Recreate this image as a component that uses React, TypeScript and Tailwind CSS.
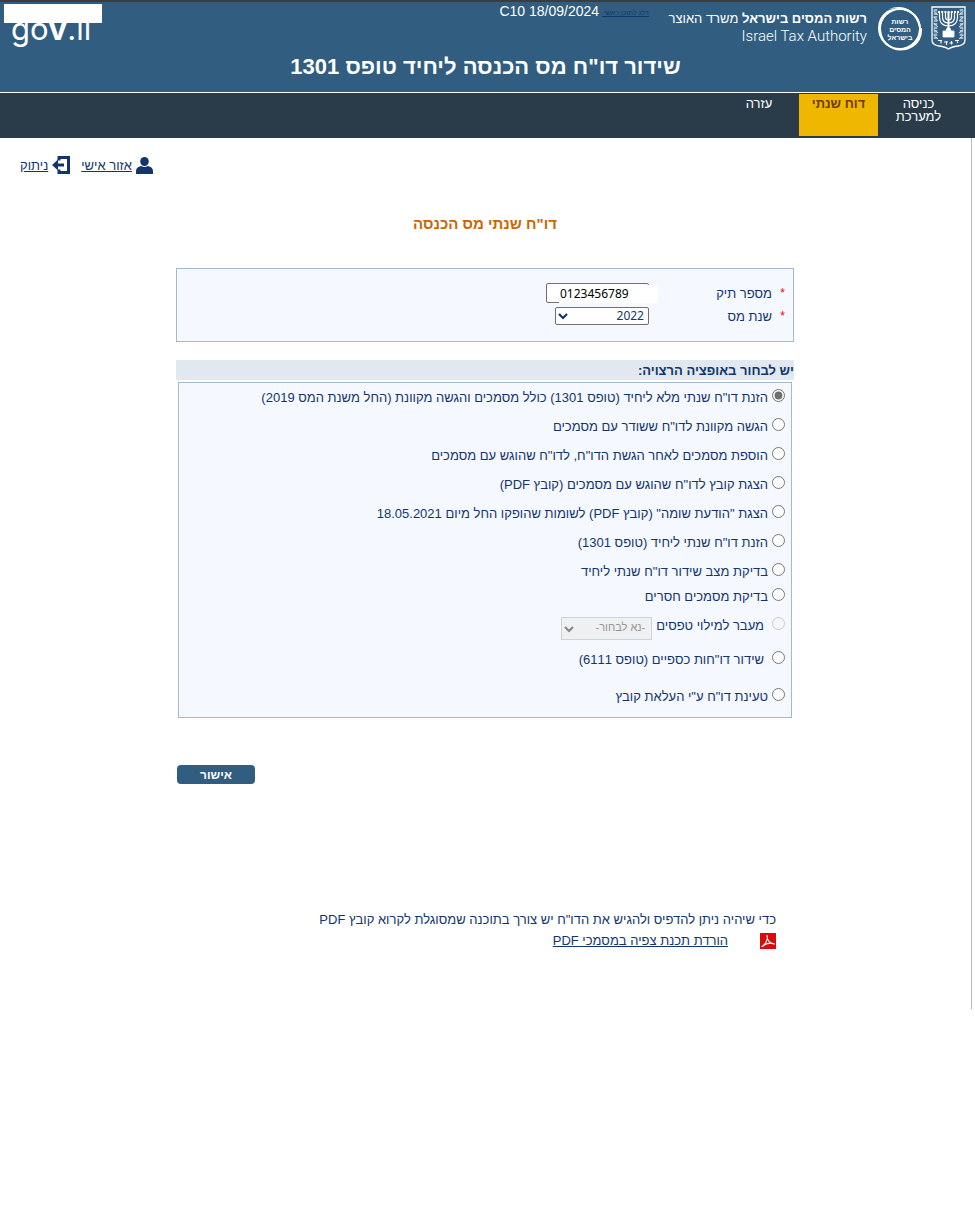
import { useState, type ReactNode } from "react";

function Emblem() {
  return (
    <svg width="35" height="44" viewBox="0 0 35 44" fill="none" stroke="white" aria-label="סמל המדינה">
      <path d="M1 1H34V34Q34 39 27 40Q20 41 17.500 43Q15 41 8 40Q1 39 1 34Z" strokeWidth="1.300" />
      <path d="M4.500 3V33M30.500 3V33" strokeWidth="3.500" strokeDasharray="2.500 1" opacity="0.55" />
      <path d="M2.500 5L7 9M2.500 11L7 15M2.500 17L7 21M2.500 23L7 27M2.500 29L7 33M32.500 5L28 9M32.500 11L28 15M32.500 17L28 21M32.500 23L28 27M32.500 29L28 33" strokeWidth="0.900" opacity="0.8" />
      <path d="M8.500 7V11Q8.500 20 17.500 20Q26.500 20 26.500 11V7M11.500 7V11Q11.500 17 17.500 17Q23.500 17 23.500 11V7M14.500 7V11Q14.500 14 17.500 14Q20.500 14 20.500 11V7" strokeWidth="1.200" />
      <path d="M17.500 6V26" strokeWidth="2" />
      <path d="M7 6H28" strokeWidth="2" strokeDasharray="2 1.200" />
      <path d="M16 22H19L20 25H23V31H12V25H15Z" fill="white" strokeWidth="0.800" />
      <path d="M7 34.500H11M13 36H17M18.500 37H22M24 34.500H28M10 34V37.500M15.500 35V39M20.500 35V38.500M26.500 34V37" strokeWidth="1.100" />
    </svg>
  );
}

function AuthorityLogo() {
  return (
    <svg width="46" height="46" viewBox="0 0 46 46" fill="none" aria-label="רשות המסים בישראל">
      <circle cx="23" cy="23" r="20" stroke="white" strokeWidth="1.800" />
      <path d="M11 3.500Q24 -2 34 5Q45 12 44 27Q42 22 41 18Q37 5 22 3Q16 2 11 3.500Z" fill="white" />
      <path d="M45 22Q46 34 36 41Q26 47 15 43Q25 44 33 39Q42 33 42 23Z" fill="white" />
      <path d="M20 44Q6 41 2 29Q-2 14 10 5Q14 3 18 3Q6 8 4 19Q3 33 12 39Q16 42 20 44Z" fill="white" />
      <g fill="white" fontFamily="Liberation Sans, sans-serif" fontSize="7" fontWeight="700" textAnchor="middle">
        <text x="23" y="18">רשות</text>
        <text x="23" y="26">המסים</text>
        <text x="23" y="34">בישראל</text>
      </g>
    </svg>
  );
}

function UserIcon() {
  return (
    <svg width="17" height="17" viewBox="0 0 16 17" fill="#12366c" aria-hidden="true" preserveAspectRatio="none">
      <ellipse cx="8" cy="4.500" rx="4" ry="4.500" />
      <path d="M0 17V14Q0 10 5 9Q8 11 11 9Q16 10 16 14V17Z" />
    </svg>
  );
}

function ExitIcon() {
  return (
    <svg width="18" height="18" viewBox="0 0 18 18" fill="none" aria-hidden="true">
      <path d="M7 4.500V1.500H16.500V16.500H7V13.500" stroke="#12366c" strokeWidth="3" />
      <path d="M0 9L6 3.500V7.500H12V10.500H6V14.500Z" fill="#12366c" />
    </svg>
  );
}

function PdfIcon() {
  return (
    <svg width="16" height="16" viewBox="0 0 16 16" aria-hidden="true">
      <rect width="16" height="16" fill="#d90a0e" />
      <path d="M2 13.500C5 12 8.500 6 7 2.500C7 7 10 11 14.500 11C11 9.500 6 10.500 2 13.500Z" fill="none" stroke="white" strokeWidth="1.100" strokeLinejoin="round" />
    </svg>
  );
}

function Chevron({ className }: { className: string }) {
  return (
    <svg className={className} width="10" height="7" viewBox="0 0 10 7" fill="none" aria-hidden="true">
      <path d="M1 1L5 5L9 1" stroke="currentColor" strokeWidth="2.200" />
    </svg>
  );
}

const options: { id: string; label: string; row: string; gap: string; disabled?: boolean }[] = [
  { id: "full", label: 'הזנת דו"ח שנתי מלא ליחיד (טופס 1301) כולל מסמכים והגשה מקוונת (החל משנת המס 2019)', row: "h-[29px]", gap: "gap-1" },
  { id: "online", label: 'הגשה מקוונת לדו"ח ששודר עם מסמכים', row: "h-[29px]", gap: "gap-1" },
  { id: "add", label: 'הוספת מסמכים לאחר הגשת הדו"ח, לדו"ח שהוגש עם מסמכים', row: "h-[29px]", gap: "gap-1" },
  { id: "view", label: 'הצגת קובץ לדו"ח שהוגש עם מסמכים (קובץ PDF)', row: "h-[29px]", gap: "gap-1" },
  { id: "notice", label: 'הצגת "הודעת שומה" (קובץ PDF) לשומות שהופקו החל מיום 18.05.2021', row: "h-[29px]", gap: "gap-1" },
  { id: "single", label: 'הזנת דו"ח שנתי ליחיד (טופס 1301)', row: "h-[29px]", gap: "gap-1" },
  { id: "status", label: 'בדיקת מצב שידור דו"ח שנתי ליחיד', row: "h-[25px]", gap: "gap-1" },
  { id: "missing", label: "בדיקת מסמכים חסרים", row: "h-[29px]", gap: "gap-1" },
  { id: "forms", label: "מעבר למילוי טפסים", row: "h-[34px]", gap: "gap-2", disabled: true },
  { id: "financial", label: 'שידור דו"חות כספיים (טופס 6111)', row: "h-[37px]", gap: "gap-2" },
  { id: "upload", label: 'טעינת דו"ח ע"י העלאת קובץ', row: "h-[29px]", gap: "gap-1" },
];

function Field({ id, label, children }: { id: string; label: string; children: ReactNode }) {
  return (
    <div className="flex h-[23px] items-center">
      <span className="w-[13px] text-[12px] text-[#f00000]">*</span>
      <label htmlFor={id} className="w-[123px] pt-[2px]">{label}</label>
      {children}
    </div>
  );
}

export default function App() {
  const [choice, setChoice] = useState("full");
  return (
    <div dir="rtl" className="min-h-screen bg-white font-['Liberation_Sans',Arial,sans-serif] text-[13px] leading-4 text-[#12366c]">
      <header className="border-t-2 border-b border-t-[#3c3c3c] border-b-white bg-[#305d80] text-white">
        <div className="flex h-[50px] items-start">
          <div className="flex gap-2 ps-[9px] pt-1">
            <Emblem />
            <AuthorityLogo />
          </div>
          <div className="w-[215px] ps-[10px] pt-2">
            <p className="leading-[17px]"><b>רשות המסים בישראל</b> משרד האוצר</p>
            <p dir="ltr" className="text-right font-['Roboto','Liberation_Sans',sans-serif] text-[15px] leading-[18px] font-light">Israel Tax Authority</p>
          </div>
          <div className="flex items-center gap-[3px] ps-[13px] pt-px text-[14px]">
            <a href="#main" className="pt-1 text-[7px] leading-[8px] text-[#12366c] underline">דלג לתוכן ראשי&nbsp;</a>
            <span dir="ltr">C10 18/09/2024</span>
          </div>
          <div dir="ltr" className="relative mr-auto ml-1 mt-[2px] h-[46px] w-[98px] pl-[7px] font-['Inter',sans-serif] text-[31px] leading-[50px]">
            go<b>v</b>.il
            <span className="absolute top-0 left-0 h-[19px] w-full bg-white" />
          </div>
        </div>
        <h1 className="ms-1 h-10 text-center text-[22px] leading-[29px] font-bold">שידור דו"ח מס הכנסה ליחיד טופס 1301</h1>
      </header>
      <nav className="flex h-[45px] bg-[#2a3b4a] pt-px ps-4 text-center leading-[13px] text-white">
        <a href="#enter" className="h-[42px] w-[81px] px-3 pt-[3px]">כניסה למערכת</a>
        <a href="#annual" className="h-[42px] w-[79px] bg-[#f0b700] pt-[3px] font-bold text-[#6b3d00]">דוח שנתי</a>
        <a href="#help" className="h-[42px] w-20 pt-[3px]">עזרה</a>
      </nav>
      <main id="main" className="ms-[3px] border-s border-[#b8b8b8] ps-px pb-[60px]">
        <div className="flex items-center justify-end gap-[11px] pe-5 pt-[18px]">
          <a href="#personal" className="flex items-center gap-1 underline"><UserIcon /><span className="pt-px">אזור אישי</span></a>
          <a href="#logout" className="flex items-center gap-1 underline"><ExitIcon /><span className="pt-px">ניתוק</span></a>
        </div>
        <h2 className="pt-[42px] text-center text-[15px] leading-4 font-bold text-[#cc6600]">דו"ח שנתי מס הכנסה</h2>
        <form className="mx-auto mt-9 max-w-[618px]" onSubmit={(e) => e.preventDefault()}>
          <section className="h-[74px] border border-[#a3b9d3] bg-[#f5f8ff] ps-2 pt-3">
            <Field id="file" label="מספר תיק">
              <div className="relative h-5 w-[103px] rounded-[2px] border border-[#707070] bg-white">
                <input id="file" dir="ltr" defaultValue="0123456789" className="absolute top-px -right-[10px] h-[18px] w-[99px] bg-white ps-px font-['Noto_Sans',sans-serif] text-[12px] text-black outline-none" />
              </div>
            </Field>
            <Field id="year" label="שנת מס">
              <div className="relative">
                <select id="year" className="block h-[18px] w-[94px] appearance-none rounded-[2px] border border-[#707070] bg-white px-1 font-['Noto_Sans',sans-serif] text-[12px] leading-4">
                  <option>2022</option>
                </select>
                <Chevron className="pointer-events-none absolute top-[6px] left-[3px]" />
              </div>
            </Field>
          </section>
          <fieldset className="mt-[18px]">
            <legend className="mb-[2px] h-5 w-full bg-[#e1e8f0] leading-[21px] font-bold">יש לבחור באופציה הרצויה:</legend>
            <div className="mx-[2px] border border-[#a3b9d3] bg-[#f5f8ff] ps-[6px] pt-[6px]">
              {options.map((o) => (
                <div key={o.id} className={`flex items-start ${o.gap} ${o.row}`}>
                  <input
                    type="radio"
                    name="action"
                    id={o.id}
                    disabled={o.disabled}
                    checked={choice === o.id}
                    onChange={() => setChoice(o.id)}
                    className="size-[13px] shrink-0 accent-[#707070]"
                  />
                  <label htmlFor={o.id} className="pt-px">{o.label}</label>
                  {o.disabled && (
                    <div className="relative -ms-1">
                      <select disabled aria-label="בחירת טופס" className="block h-[23px] w-[91px] appearance-none border border-[#ced3da] bg-[#eff0f2] px-[6px] pb-1 text-[11px] leading-4 text-[#969696] opacity-100">
                        <option>-נא לבחור-</option>
                      </select>
                      <Chevron className="pointer-events-none absolute top-[9px] left-[3px] text-[#888888]" />
                    </div>
                  )}
                </div>
              ))}
            </div>
          </fieldset>
          <div className="mt-[47px] flex justify-end pe-px">
            <button type="submit" className="h-[19px] w-[78px] rounded-[4px] bg-[#305d80] text-[12px] leading-[18px] font-bold text-white">אישור</button>
          </div>
          <footer className="ps-[18px] pt-[128px]">
            <p>כדי שיהיה ניתן להדפיס ולהגיש את הדו"ח יש צורך בתוכנה שמסוגלת לקרוא קובץ PDF</p>
            <p className="mt-[5px] flex items-center gap-8">
              <PdfIcon />
              <a href="#pdf" className="underline">הורדת תכנת צפיה במסמכי PDF</a>
            </p>
          </footer>
        </form>
      </main>
    </div>
  );
}
